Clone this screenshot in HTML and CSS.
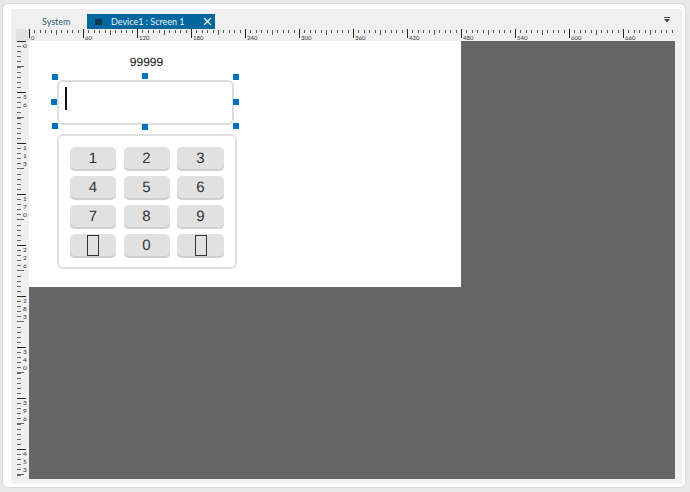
FILE: index.html
```html
<!DOCTYPE html>
<html lang="en">
  <head>
    <meta charset="UTF-8" />
    <meta name="viewport" content="width=device-width, initial-scale=1.0" />
    <title>Device1 : Screen 1</title>
    <link rel="stylesheet" href="styles.css">
  </head>
  <body>
    <div class="panel">
      <div class="editor">
        <div class="tabs">
          <div class="tab">System</div>
          <div class="tab tab-active">
            <span class="tab-icon"></span>
            <span class="tab-title">Device1 : Screen 1</span>
            <svg class="tab-close" width="9" height="9" viewBox="0 0 9 9">
              <path d="M1 1L8 8M8 1L1 8" stroke="#fff" stroke-width="1.2" fill="none" />
            </svg>
          </div>
          <svg class="tabs-menu" width="6" height="6" viewBox="0 0 6 6">
            <path d="M0 .5H6" stroke="#444" fill="none" />
            <path d="M0 2H6L3 5.5Z" fill="#444" />
          </svg>
        </div>
        <div class="workspace">
          <div class="ruler-corner"></div>
          <div class="ruler-top">
            <span>0</span><span>60</span><span>120</span><span>180</span><span>240</span><span>300</span>
            <span>360</span><span>420</span><span>480</span><span>540</span><span>600</span><span>660</span>
          </div>
          <div class="ruler-left">
            <span>0</span><span>56</span><span>113</span><span>170</span><span>226</span>
            <span>283</span><span>340</span><span>396</span><span>453</span>
          </div>
          <div class="canvas">
            <div class="screen">
              <div class="value-label">99999</div>
              <div class="input-box"><span class="caret"></span></div>
              <span class="handle h-tl"></span>
              <span class="handle h-tc"></span>
              <span class="handle h-tr"></span>
              <span class="handle h-ml"></span>
              <span class="handle h-mr"></span>
              <span class="handle h-bl"></span>
              <span class="handle h-bc"></span>
              <span class="handle h-br"></span>
              <div class="keypad">
                <div class="key">1</div>
                <div class="key">2</div>
                <div class="key">3</div>
                <div class="key">4</div>
                <div class="key">5</div>
                <div class="key">6</div>
                <div class="key">7</div>
                <div class="key">8</div>
                <div class="key">9</div>
                <div class="key"><span class="tofu"></span></div>
                <div class="key">0</div>
                <div class="key"><span class="tofu"></span></div>
              </div>
            </div>
          </div>
        </div>
      </div>
    </div>
  </body>
</html>
```

FILE: styles.css
```css
body {
  margin: 0;
  width: 690px;
  height: 492px;
  overflow: hidden;
  background-color: #e8e8e8;
  font-family: Lato, "Open Sans", sans-serif;
  padding: 3px 4px 4px 2px;
  box-sizing: border-box;
}
.panel {
  height: 100%;
  box-sizing: border-box;
  padding: 5px 3px 3px 8px;
  background-color: #fff;
  border: 1px solid #dcdcdc;
  border-radius: 6px;
}
.editor {
  height: 100%;
  display: flex;
  flex-direction: column;
  background-color: #f0f0f0;
  padding: 5px 5px 4px 5px;
  box-sizing: border-box;
}
.tabs {
  height: 15px;
  flex: none;
  display: flex;
  position: relative;
  padding-left: 26px;
  font-size: 9px;
  line-height: 15px;
}
.tab {
  width: 45px;
  color: #2c5c70;
}
.tab-active {
  width: 128px;
  display: flex;
  align-items: center;
  background-color: #00689f;
  color: #e8f2f8;
}
.tab-icon {
  width: 7px;
  height: 6px;
  margin-left: 8px;
  background-color: #0b3a4d;
}
.tab-title {
  margin-left: 9px;
  flex: 1;
}
.tab-close {
  margin-right: 3px;
}
.tabs-menu {
  position: absolute;
  right: 7px;
  top: 3px;
}
.workspace {
  flex: 1;
  display: grid;
  grid-template-columns: 13px 646px;
  grid-template-rows: 12px 438px;
}
.ruler-corner {
  background-color: #e2e2e2;
}
.ruler-top {
  display: flex;
  overflow: hidden;
  background:
    repeating-linear-gradient(to right, #222 0 1px, transparent 1px 54px) 0 0 / 100% 9px no-repeat,
    repeating-linear-gradient(to right, #555 0 1px, transparent 1px 27px) 0 1px / 100% 5px no-repeat,
    repeating-linear-gradient(to right, #555 0 1px, transparent 1px 5.4px) 0 1px / 100% 3px no-repeat;
}
.ruler-top span {
  flex: 0 0 54px;
  box-sizing: border-box;
  padding: 5px 0 0 2px;
  font-size: 6px;
  line-height: 7px;
  color: #333;
}
.ruler-left {
  display: flex;
  flex-direction: column;
  overflow: hidden;
  background:
    repeating-linear-gradient(to bottom, #222 0 1px, transparent 1px 51px) 1px 0 / 9px 100% no-repeat,
    repeating-linear-gradient(to bottom, #666 0 1px, transparent 1px 25.5px) 1px 0 / 7px 100% no-repeat,
    repeating-linear-gradient(to bottom, #666 0 1px, transparent 1px 5.1px) 1px 0 / 4px 100% no-repeat;
}
.ruler-left span {
  flex: 0 0 51px;
  box-sizing: border-box;
  width: 100%;
  padding: 1px 0 0 7px;
  font-size: 6.5px;
  line-height: 8px;
  color: #333;
  word-break: break-all;
}
.canvas {
  background-color: #666;
  position: relative;
  overflow: hidden;
}
.screen {
  position: relative;
  width: 432px;
  height: 246px;
  background-color: #fff;
  font-family: "Liberation Sans", Arial, sans-serif;
  text-rendering: geometricPrecision;
}
.value-label {
  position: absolute;
  left: 28px;
  top: 14px;
  width: 177px;
  padding-left: 1px;
  text-align: center;
  font-size: 12px;
  line-height: 14px;
  color: #111;
}
.input-box {
  position: absolute;
  left: 28px;
  top: 39px;
  width: 177px;
  height: 45px;
  box-sizing: border-box;
  border: 2px solid #ddd;
  border-radius: 6px;
}
.caret {
  position: absolute;
  left: 6px;
  top: 5px;
  width: 2px;
  height: 23px;
  background-color: #111;
}
.handle {
  position: absolute;
  width: 6px;
  height: 6px;
  background-color: #0070c0;
}
.h-tl { left: 23px; top: 33px; }
.h-tc { left: 113px; top: 32px; }
.h-tr { left: 204px; top: 33px; }
.h-ml { left: 22px; top: 58px; }
.h-mr { left: 204px; top: 58px; }
.h-bl { left: 23px; top: 82px; }
.h-bc { left: 113px; top: 83px; }
.h-br { left: 204px; top: 82px; }
.keypad {
  position: absolute;
  left: 28px;
  top: 93px;
  width: 180px;
  height: 135px;
  box-sizing: border-box;
  padding: 11px;
  border: 2px solid #e0e0e0;
  border-radius: 6px;
  display: grid;
  grid-template-columns: 46px 46px 47px;
  grid-template-rows: repeat(4, 24px);
  column-gap: 7.5px;
  row-gap: 5px;
}
.key {
  display: flex;
  align-items: center;
  justify-content: center;
  padding-bottom: 1px;
  box-sizing: border-box;
  background-color: #e1e1e1;
  border-radius: 5px;
  box-shadow: inset 0 -2px 0 #cfcfcf;
  font-size: 15px;
  color: #333;
}
.tofu {
  width: 12px;
  height: 21px;
  box-sizing: border-box;
  border: 1px solid #333;
}
```
